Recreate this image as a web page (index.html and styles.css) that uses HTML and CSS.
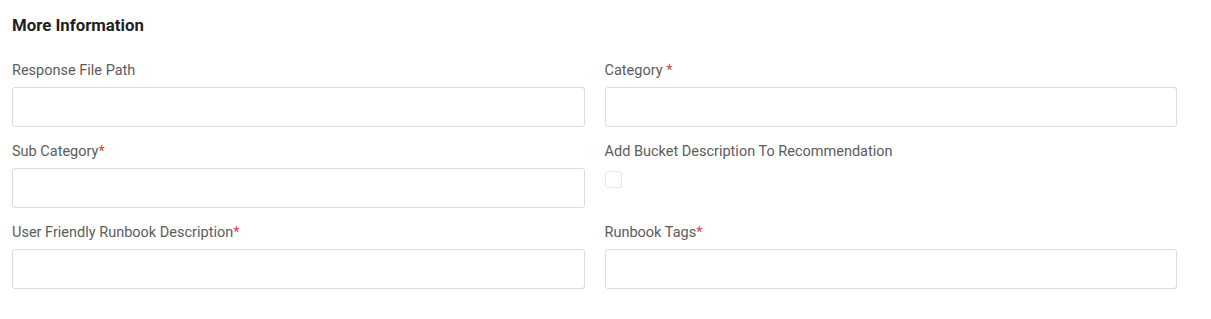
FILE: index.html
```html
<!DOCTYPE html>
<html lang="en">

<head>
    <meta charset="UTF-8" />
    <title>More Information</title>
    <link rel="stylesheet" href="styles.css">
</head>

<body>
    <section class="panel">
        <h3 class="panel-title">More Information</h3>
        <div class="form-grid">
            <div class="field">
                <label class="label">Response File Path</label>
                <input class="input" type="text" />
            </div>
            <div class="field">
                <label class="label">Category <span class="req">*</span></label>
                <input class="input" type="text" />
            </div>
            <div class="field">
                <label class="label">Sub Category<span class="req">*</span></label>
                <input class="input" type="text" />
            </div>
            <div class="field">
                <label class="label">Add Bucket Description To Recommendation</label>
                <span class="checkbox"></span>
            </div>
            <div class="field">
                <label class="label">User Friendly Runbook Description<span class="req">*</span></label>
                <input class="input" type="text" />
            </div>
            <div class="field">
                <label class="label">Runbook Tags<span class="req">*</span></label>
                <input class="input" type="text" />
            </div>
        </div>
    </section>
</body>

</html>
```

FILE: styles.css
```css
* {
    margin: 0;
    padding: 0;
    box-sizing: border-box;
}

body {
    background: #fff;
    font-family: Roboto, "Noto Sans", Arial, sans-serif;
    color: #222;
}

.panel {
    padding: 15px 34px 0 12px;
}

.panel-title {
    font-size: 16.8px;
    font-weight: 700;
    line-height: 20px;
    color: #1f1f1f;
    margin-bottom: 24px;
}

.form-grid {
    display: grid;
    grid-template-columns: 1fr 1fr;
    column-gap: 20px;
    row-gap: 13px;
}

.field {
    display: flex;
    flex-direction: column;
}

.label {
    font-size: 14.5px;
    line-height: 20px;
    padding-top: 2px;
    color: #5c5c5c;
    margin-bottom: 6px;
}

.req {
    color: #d0464a;
}

.input {
    height: 40px;
    border: 1px solid #dcdcdc;
    border-radius: 3px;
    background: #fff;
    outline: none;
}

.checkbox {
    width: 17px;
    height: 17px;
    margin-top: 3px;
    border: 1px solid #e6e6e6;
    border-radius: 3px;
}
```
